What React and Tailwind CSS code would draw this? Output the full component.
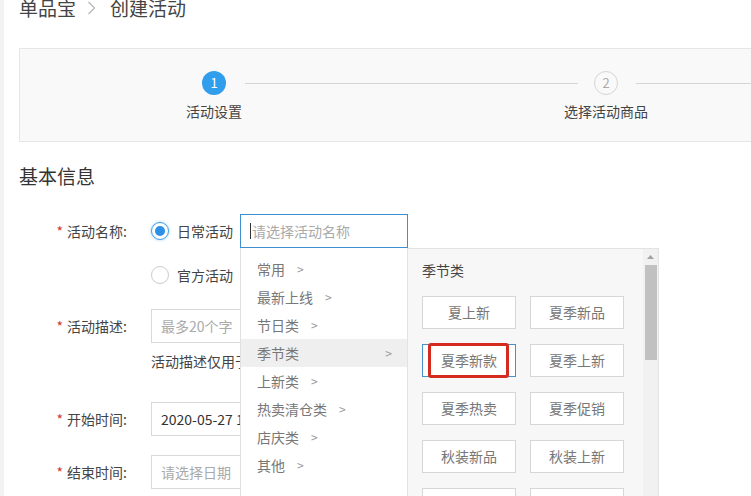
import React from "react";

const FONT = "font-['Noto_Sans_CJK_SC','Liberation_Sans',sans-serif]";

const CATEGORIES = ["常用", "最新上线", "节日类", "季节类", "上新类", "热卖清仓类", "店庆类", "其他"];
const TAGS = ["夏上新", "夏季新品", "夏季新款", "夏季上新", "夏季热卖", "夏季促销", "秋装新品", "秋装上新", "秋季新款", "秋季上新"];

const Step = ({ n, label, active }) => (
  <div className="flex flex-col items-center w-[24px] shrink-0">
    <div
      className={
        active
          ? "w-[24px] h-[24px] rounded-full bg-[#319ded] text-white text-[13px] leading-[24px] text-center"
          : "w-[24px] h-[24px] rounded-full border border-[#d5d5d5] text-[#aaa] text-[13px] leading-[22px] text-center"
      }
    >
      {n}
    </div>
    <div className="mt-[8px] whitespace-nowrap text-[14px] leading-[16px] text-[#444]">{label}</div>
  </div>
);

const Radio = ({ checked }) =>
  checked ? (
    <div className="w-[18px] h-[18px] rounded-full border border-[#3d9be9] flex items-center justify-center shadow-[0_0_3px_rgba(61,155,233,0.5)]">
      <div className="w-[10px] h-[10px] rounded-full bg-[#2d8fe6]" />
    </div>
  ) : (
    <div className="w-[18px] h-[18px] rounded-full border border-[#cccccc] bg-white" />
  );

const Label = ({ children }) => (
  <div className="w-[132px] shrink-0 text-right pr-[24px] text-[14px] text-[#444]">
    {children && <span className="text-[#d9362b] mr-[4px]">*</span>}
    {children}
  </div>
);

const Dropdown = () => (
  <div className="absolute left-0 top-full z-10 flex h-[260px]">
    <div className="w-[167px] border-l border-[#e0e0e0] bg-white pt-[7px]">
      {CATEGORIES.map((c) =>
        c === "季节类" ? (
          <div key={c} className="h-[28px] flex items-center justify-between pl-[16px] pr-[15px] bg-[#efefef] text-[14px] text-[#777]">
            <span>{c}</span>
            <span className="text-[12px] text-[#999]">&gt;</span>
          </div>
        ) : (
          <div key={c} className="h-[28px] flex items-center pl-[16px] text-[14px] text-[#777]">
            <span>{c}</span>
            <span className="ml-[12px] text-[12px] text-[#999]">&gt;</span>
          </div>
        )
      )}
    </div>
    <div className="w-[252px] flex bg-[#f7f7f7] border border-[#e3e3e3]">
      <div className="flex-1 pl-[14px] pt-[11px]">
        <div className="text-[14px] leading-[20px] text-[#444]">季节类</div>
        <div className="mt-[16px] grid grid-cols-[94px_94px] gap-x-[14px] gap-y-[15px]">
          {TAGS.map((t) =>
            t === "夏季新款" ? (
              <div key={t} className="relative h-[33px] bg-white border border-[#4a90c8] flex items-center justify-center text-[14px] text-[#777]">
                {t}
                <div className="absolute left-[5px] right-[6px] top-[-2px] bottom-[-2px] border-[3px] border-[#d52b1e] rounded-[3px]" />
              </div>
            ) : (
              <div key={t} className="h-[33px] bg-white border border-[#d6d6d6] flex items-center justify-center text-[14px] text-[#777]">
                {t}
              </div>
            )
          )}
        </div>
      </div>
      <div className="w-[15px] bg-[#f1f1f1] flex flex-col items-center">
        <svg width="9" height="16" viewBox="0 0 9 16" className="shrink-0">
          <path d="M1 10 L4.5 6 L8 10 Z" fill="#a3a3a3" />
        </svg>
        <div className="w-[12px] h-[95px] bg-[#c1c1c1]" />
      </div>
    </div>
  </div>
);

export default function App() {
  return (
    <div className={`${FONT} w-[751px] h-[496px] overflow-hidden bg-white flex`}>
      <div className="w-[4px] shrink-0 bg-[#f3f3f3]" />
      <div className="pl-[15px] flex-1">
        <div className="h-[20px] mt-[-2px] leading-[20px] text-[19px] text-[#444] whitespace-nowrap flex items-center">
          <span>单品宝</span>
          <svg width="9" height="14" viewBox="0 0 9 14" className="ml-[11px] mr-[14px] shrink-0">
            <path d="M1.5 1 L7.5 7 L1.5 13" fill="none" stroke="#b5b5b5" strokeWidth="1.2" />
          </svg>
          <span>创建活动</span>
        </div>

        <div className="mt-[30px] w-[900px] h-[94px] border border-[#e6e6e6] bg-[#f9f9f9] pl-[182px] pt-[22px] flex items-start">
          <Step n={1} label="活动设置" active />
          <div className="shrink-0 mt-[12px] ml-[19px] w-[333px] h-px bg-[#d5d5d5]" />
          <div className="shrink-0 ml-[16px]">
            <Step n={2} label="选择活动商品" />
          </div>
          <div className="shrink-0 mt-[12px] ml-[18px] w-[300px] h-px bg-[#d5d5d5]" />
        </div>

        <div className="mt-[20px] text-[19px] leading-[28px] text-[#333]">基本信息</div>

        <div className="mt-[24px] flex items-center h-[34px]">
          <Label>活动名称:</Label>
          <Radio checked />
          <span className="ml-[8px] text-[14px] text-[#444] whitespace-nowrap">日常活动</span>
          <div className="relative ml-[7px]">
            <div className="w-[168px] h-[34px] border border-[#3d8fd0] bg-white flex items-center pl-[9px] text-[14px] text-[#aaa]">
              <span className="w-px h-[16px] bg-[#333] mr-[1px]" />
              请选择活动名称
            </div>
            <Dropdown />
          </div>
        </div>

        <div className="mt-[10px] flex items-center h-[34px]">
          <Label />
          <Radio />
          <span className="ml-[8px] text-[14px] text-[#444] whitespace-nowrap">官方活动</span>
        </div>

        <div className="mt-[17px] flex items-center h-[34px]">
          <Label>活动描述:</Label>
          <div className="w-[300px] h-[34px] border border-[#d9d9d9] flex items-center pl-[9px] text-[14px] text-[#aaa]">最多20个字</div>
        </div>
        <div className="mt-[8px] pl-[132px] text-[14px] leading-[20px] text-[#444] whitespace-nowrap">活动描述仅用于买家端展示，不超过20个字</div>

        <div className="mt-[31px] flex items-center h-[34px]">
          <Label>开始时间:</Label>
          <div className="w-[300px] h-[34px] border border-[#d9d9d9] flex items-center pl-[9px] text-[14px] text-[#333]">2020-05-27 10:00:00</div>
        </div>

        <div className="mt-[19px] flex items-center h-[34px]">
          <Label>结束时间:</Label>
          <div className="w-[300px] h-[34px] border border-[#d9d9d9] flex items-center pl-[9px] text-[14px] text-[#aaa]">请选择日期</div>
        </div>
      </div>
    </div>
  );
}
